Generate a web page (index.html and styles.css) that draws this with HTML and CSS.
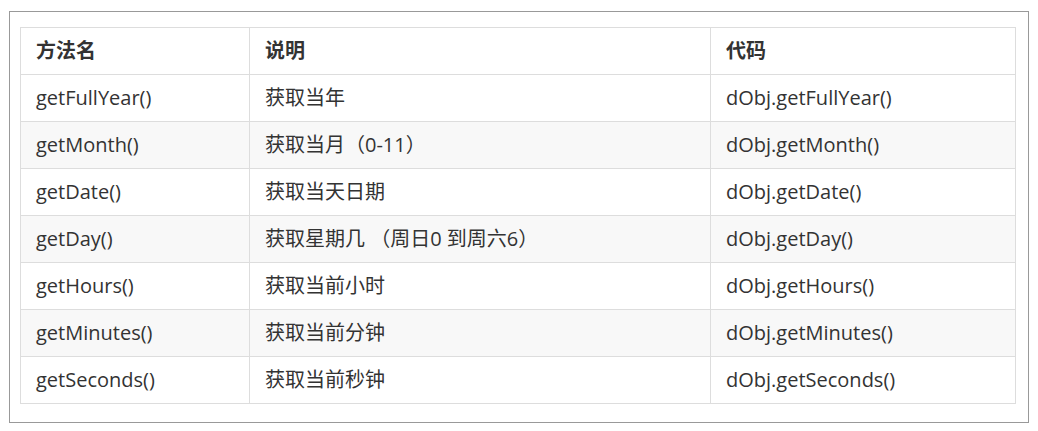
FILE: index.html
```html
<!DOCTYPE html>
<html lang="zh-CN">
<head>
<meta charset="utf-8">
<title>Date 方法</title>
<link rel="stylesheet" href="styles.css">
</head>
<body>
<div class="frame">
  <table class="methods">
    <colgroup>
      <col class="c1">
      <col class="c2">
      <col class="c3">
    </colgroup>
    <thead>
      <tr><th>方法名</th><th>说明</th><th>代码</th></tr>
    </thead>
    <tbody>
      <tr><td>getFullYear()</td><td>获取当年</td><td>dObj.getFullYear()</td></tr>
      <tr><td>getMonth()</td><td>获取当月（0-11）</td><td>dObj.getMonth()</td></tr>
      <tr><td>getDate()</td><td>获取当天日期</td><td>dObj.getDate()</td></tr>
      <tr><td>getDay()</td><td>获取星期几 （周日0 到周六6）</td><td>dObj.getDay()</td></tr>
      <tr><td>getHours()</td><td>获取当前小时</td><td>dObj.getHours()</td></tr>
      <tr><td>getMinutes()</td><td>获取当前分钟</td><td>dObj.getMinutes()</td></tr>
      <tr><td>getSeconds()</td><td>获取当前秒钟</td><td>dObj.getSeconds()</td></tr>
    </tbody>
  </table>
</div>
</body>
</html>
```

FILE: styles.css
```css
html, body {
  margin: 0;
  padding: 0;
  background: #ffffff;
}

body {
  font-family: "Open Sans", "Noto Sans CJK SC", sans-serif;
  font-size: 20px;
  color: #333333;
}

.frame {
  box-sizing: border-box;
  width: 1020px;
  height: 412px;
  margin: 11px 0 0 9px;
  padding: 15px 12px 0 10px;
  border: 1px solid #999999;
}

.methods {
  width: 995px;
  border-collapse: collapse;
  table-layout: fixed;
}

.c1 { width: 229px; }
.c2 { width: 461px; }
.c3 { width: 305px; }

.methods th,
.methods td {
  height: 46px;
  padding: 0 15px;
  border: 1px solid #dddddd;
  text-align: left;
  vertical-align: middle;
  line-height: 26px;
  white-space: nowrap;
}

.methods th {
  font-weight: 700;
  color: #333333;
}

.methods tbody tr:nth-child(even) td {
  background: #f8f8f8;
}
```
